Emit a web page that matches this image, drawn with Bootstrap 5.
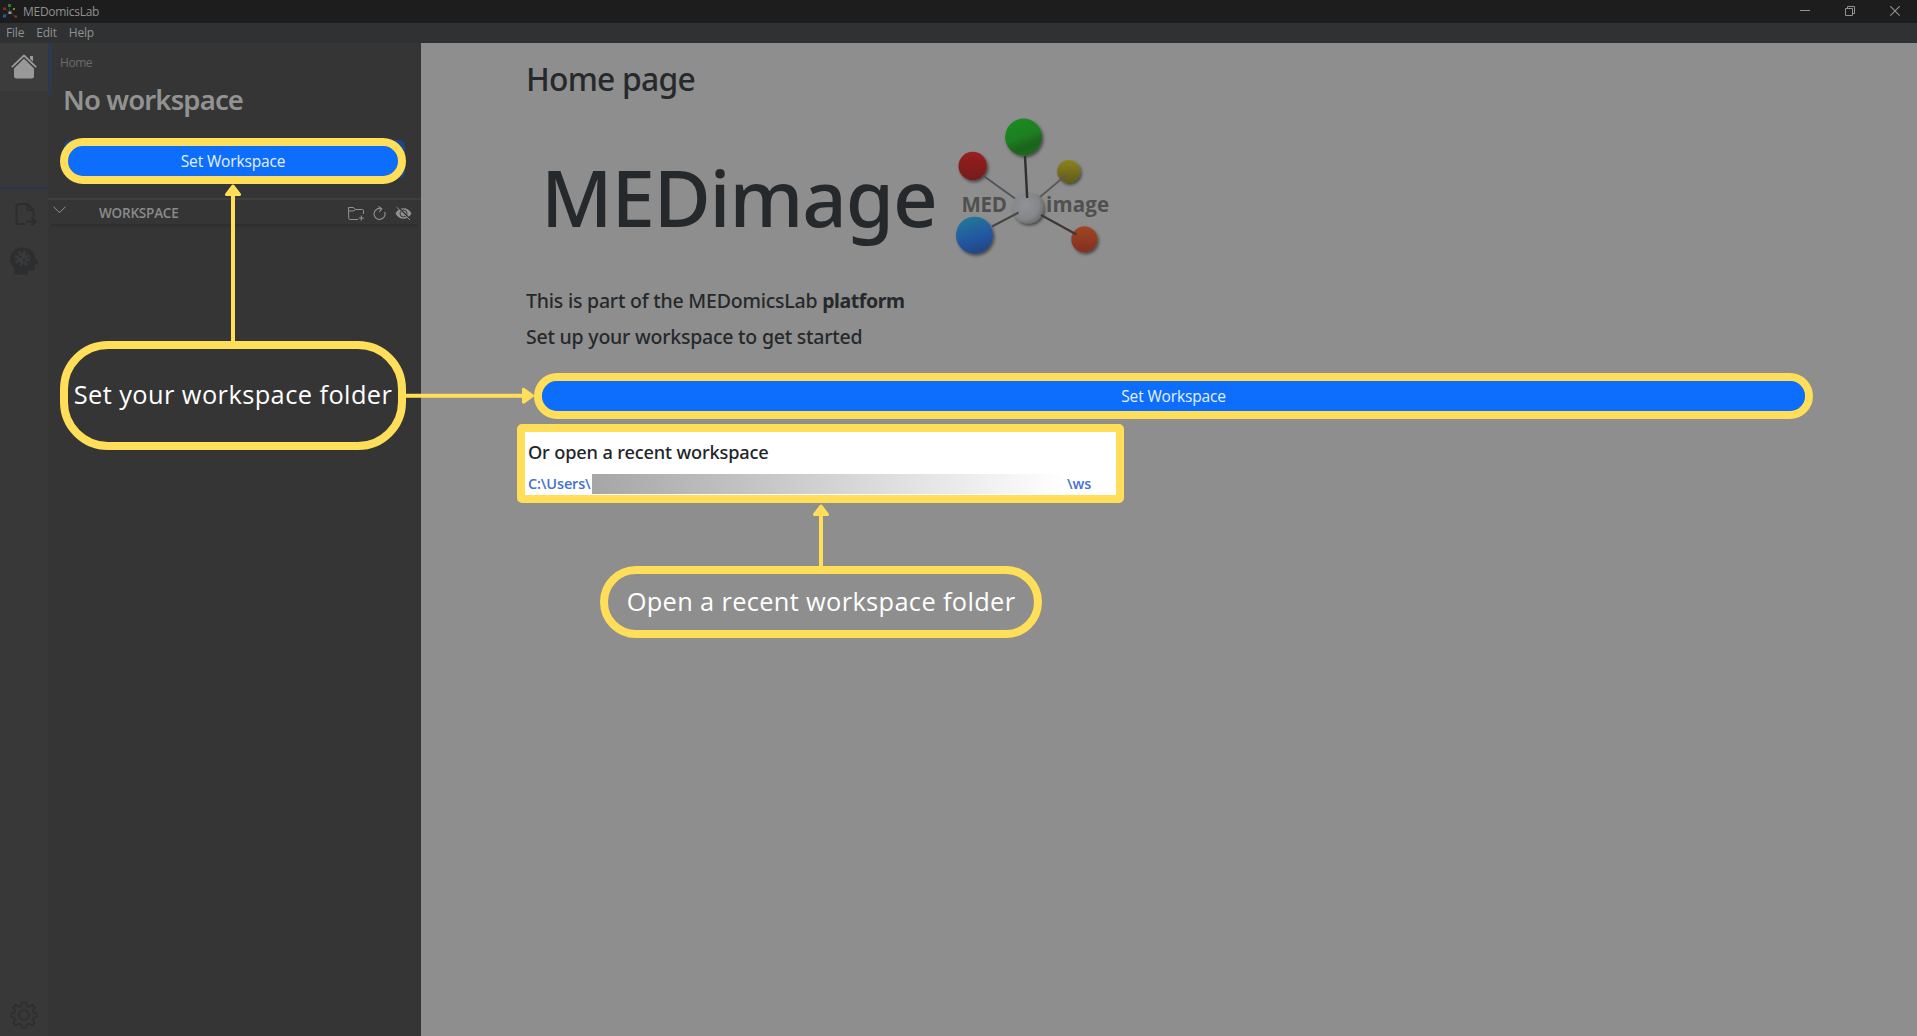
<!DOCTYPE html>
<html lang="en">
<head>
<meta charset="utf-8">
<meta name="viewport" content="width=device-width, initial-scale=1">
<title>MEDomicsLab</title>
<link href="https://cdn.jsdelivr.net/npm/bootstrap@5.3.0/dist/css/bootstrap.min.css" rel="stylesheet">
<style>
:root{--hl:#ffde59}
body{font-family:"Open Sans","Noto Sans",sans-serif;background:#8e8e8e;width:1917px;height:1036px;overflow:hidden;position:relative;color:#26292c}
svg{display:block;flex:none}
.titlebar{height:23px;background:#1d1d1d;color:#919191;font-size:12px;letter-spacing:-.28px;line-height:23px;padding-left:2px}
.titlebar .app-name{margin-left:5px}
.win-controls{gap:35px;padding-right:17px}
.menubar{height:20px;background:#2f3133;color:#919191;font-size:12px;line-height:19px;letter-spacing:-.2px;padding-left:6px;gap:12px}
.workarea{height:993px}
.rail{width:48px;background:#383838;flex:none}
.rail-home{height:48px;background:#3c3c3c}
.rail-group{height:98px;border-bottom:2px solid #26344d}
.rail-file{margin:13px 0 0 3px}
.rail-mind{margin-top:20px}
.rail-gear{margin-bottom:7px}
.rail-strip{position:absolute;left:48px;top:43px;width:4px;height:52px;background:#2c394e}
.sidebar{width:373px;background:#353535;flex:none}
.crumb{font-size:12px;letter-spacing:-.45px;color:#6b6b6b;line-height:16px;margin:12px 0 0 12px}
.ws-title{font-family:"Noto Sans","Open Sans",sans-serif;font-size:27.5px;font-weight:600;letter-spacing:-.88px;line-height:34px;color:#929292;margin:12px 0 0 15px}
.ws-btn-wrap{margin:23px 16px 0 16px;background:#1d4686;border-radius:6px;height:38px}
.btn-ws{background:#0d6efd;color:#e8f1ff;font-size:15.5px;letter-spacing:-.15px;line-height:1;border:0;border-radius:15px;height:30px;padding:1px 0 0}
.btn-ws:hover{background:#0d6efd;color:#fff}
.ws-btn-wrap .btn-ws{margin:6px 4px 2px;width:330px}
.acc-head{margin-top:20px;height:26px;border-top:2px solid #3f3f3f;color:#8b8b8b;padding:0 9px 0 5px}
.acc-shadow{margin:0 3px;height:4px;background:linear-gradient(#2d2d2d,#353535)}
.acc-chevron{margin-top:-4px}
.acc-label{font-size:13.5px;font-weight:600;letter-spacing:-.2px;line-height:24px;margin:1px 0 0 33px}
.acc-tools{gap:9px;padding-top:2px}
.content-pane{padding:17px 0 0 105px}
.content-pane h2,.content-pane h1,.content-pane h5{font-family:"Noto Sans","Open Sans",sans-serif;font-weight:500;margin:0}
.content-pane h2{font-size:31.8px;letter-spacing:-.75px;line-height:38px}
.brand-row{height:170px;margin-top:2px}
.content-pane h1{font-size:78px;letter-spacing:-1.15px;line-height:194px;width:383px;margin-left:15px;white-space:nowrap}
.brand-row svg{margin-left:6px}
.content-pane h5{font-size:19.5px;letter-spacing:-.22px;line-height:24px}
.content-pane h5 b{font-weight:700;letter-spacing:-.4px}
.line-one{padding-top:19px}
.line-two{padding-top:12px}
.main-btn-row{margin:24px 0 0 8px;width:1279px;height:46px}
.hl-pill{border:8px solid var(--hl);border-radius:23px}
.recent-box{margin:5px 0 0 -9px;width:607px;height:79px;border:8px solid var(--hl);border-radius:5px;background:#fff;color:#212529;padding:8px 3px 0}
.content-pane .recent-box h5{font-size:18.2px;letter-spacing:-.15px}
.recent-path{height:20px;margin-top:10px;color:#4472d0;font-weight:600;font-size:14.5px;letter-spacing:-.15px;line-height:20px}
.path-start{width:63px}
.path-end{margin-left:2px}
.masked{width:473px;height:20px;margin-left:1px;background:linear-gradient(90deg,#a6a6a6,#fff)}
.callout{position:absolute;color:#fff;border:8px solid var(--hl);white-space:nowrap;display:flex;align-items:center;justify-content:center;font-size:25.4px;padding-bottom:2px}
.ring-side{position:absolute;left:60px;top:138px;width:346px;height:46px}
.callout-set{left:60px;top:341px;width:346px;height:109px;border-radius:48px;letter-spacing:.42px}
.callout-open{left:600px;top:566px;width:442px;height:72px;border-radius:36px;letter-spacing:.34px}
.arrows{position:absolute;left:0;top:0;pointer-events:none}
</style>
<script src="https://cdn.jsdelivr.net/npm/bootstrap@5.3.0/dist/js/bootstrap.bundle.min.js"></script>
</head>
<body>
<header class="titlebar d-flex align-items-center">
  <svg width="16" height="16" viewBox="0 0 16 16"><path d="M7.500 2v6M3 5l4 3M12 5L8 8M3 12l4-3M13 12L9 9" stroke="#3c3c3c" stroke-width=".8"/><g><rect x="6" y="0" width="3" height="3" fill="#178a22"/><rect x="1" y="3.500" width="3" height="2.500" fill="#9a2424"/><rect x="11" y="4" width="2" height="2" fill="#87801c"/><rect x="6.500" y="7.500" width="3" height="2.500" fill="#969696"/><rect x="1" y="10.500" width="3" height="3" fill="#1b60a8"/><rect x="12.500" y="11.500" width="2.500" height="2" fill="#9a3a20"/></g></svg>
  <span class="app-name">MEDomicsLab</span>
  <div class="win-controls d-flex align-items-center ms-auto">
    <svg width="10" height="11" viewBox="0 0 10 11"><path d="M0 4.500h10" stroke="#929292"/></svg>
    <svg width="10" height="11" viewBox="0 0 10 11" fill="none" stroke="#929292"><path d="M.5 2.500h7v7h-7zM2.500 2.500v-2h7v7h-2"/></svg>
    <svg width="10" height="11" viewBox="0 0 10 11"><path d="M.3.300l9.400 9.400M9.700.300L.3 9.700" stroke="#929292" stroke-width="1.200"/></svg>
  </div>
</header>
<nav class="menubar d-flex"><span>File</span><span>Edit</span><span>Help</span></nav>

<div class="workarea d-flex">
  <aside class="rail d-flex flex-column align-items-center">
    <div class="rail-home w-100 d-flex justify-content-center align-items-center">
      <svg width="26" height="26" viewBox="0 0 26 26"><path d="M19 2h3v6l-3-3z" fill="#999"/><path d="M3 12.500L13 3l10 9.500V22a2.500 2.500 0 0 1-2.500 2.500h-15A2.500 2.500 0 0 1 3 22z" fill="#999"/><path d="M.8 13.700L13 1.700l12.200 12" fill="none" stroke="#3c3c3c" stroke-width="4"/><path d="M.8 13.200L13 1.500l12.200 11.700" fill="none" stroke="#999" stroke-width="1.800" stroke-linejoin="round"/></svg>
    </div>
    <div class="rail-group w-100"></div>
    <svg class="rail-file" width="22" height="25" viewBox="0 0 22 25" fill="none" stroke="#2c2d2e" stroke-width="2"><path d="M10 22H4a2.500 2.500 0 0 1-2.500-2.500v-15A2.500 2.500 0 0 1 4 2h8.500l6 6v6.500M12.500 2v6h6M11 19.500h9M16.500 15.500l4 4-4 4"/></svg>
    <svg class="rail-mind" width="28" height="28" viewBox="0 0 28 28"><path d="M4 27.500v-7C1.500 18.500 0 16 0 12.500 0 5.500 5.500.5 13 .5c7 0 11.500 4 12 9.500l3 5.500c.3.700-.2 1.300-1 1.300h-2v4c0 2-1 3-3 3h-4v3.700z" fill="#2c2e30"/><circle cx="12.500" cy="11.500" r="5" fill="#3a3a3a"/><circle cx="12.500" cy="11.500" r="6.200" fill="none" stroke="#3a3a3a" stroke-width="3" stroke-dasharray="2.600 2.270"/><circle cx="10.500" cy="9.800" r="1.300" fill="#2c2e30"/><circle cx="14" cy="13" r="1.300" fill="#2c2e30"/></svg>
    <svg class="rail-gear mt-auto" width="28" height="28" viewBox="0 0 28 28" fill="none" stroke="#2e2e2e" stroke-width="1.600"><circle cx="14" cy="14" r="4.800"/><path stroke-linejoin="round" d="M12 1.500h4l.8 3.300 2.200.9 3-1.800 2.600 2.600-1.800 3 .9 2.200 3.300.8v3.400l-3.300.8-.9 2.200 1.800 3-2.600 2.600-3-1.800-2.200.9-.8 3.300h-4l-.8-3.300-2.200-.9-3 1.800-2.600-2.600 1.800-3-.9-2.200-3.300-.8v-3.400l3.300-.8.9-2.200-1.800-3 2.600-2.600 3 1.800 2.200-.9z"/></svg>
  </aside>

  <section class="sidebar">
    <div class="crumb">Home</div>
    <h3 class="ws-title">No workspace</h3>
    <div class="ws-btn-wrap d-flex"><button class="btn btn-ws">Set Workspace</button></div>
    <div class="acc-head d-flex align-items-center">
      <svg class="acc-chevron" width="13" height="8" viewBox="0 0 13 8" fill="none" stroke="#929292"><path d="M.5.700l6 6 6-6"/></svg>
      <span class="acc-label">WORKSPACE</span>
      <div class="acc-tools ms-auto d-flex align-items-center">
        <svg width="16" height="15" viewBox="0 0 16 15" fill="none" stroke="#929292"><path d="M10 13.500H2a1.500 1.500 0 0 1-1.300-1.300L.5 1.500h5L7 3.500h7.500a1 1 0 0 1 1 1V8M.6 5h5.200L7 3.700M13.300 9.500v5.200M10.700 12.100h5.200"/></svg>
        <svg width="13" height="15" viewBox="0 0 13 15" fill="none" stroke="#929292" stroke-width="1.100"><path d="M8.500 2.800A5.500 5.500 0 1 0 11.700 6M5.500.400l3.300 2.400-2.500 3"/></svg>
        <svg width="17" height="15" viewBox="0 0 17 15"><path d="M.5 7.500C4 .5 13 .5 16.500 7.500 13 14.500 4 14.500.5 7.500z" fill="#929292"/><circle cx="8.500" cy="7.500" r="3.500" fill="none" stroke="#353535"/><path d="M2.500.700l13 13" stroke="#353535" stroke-width="2"/><path d="M1.500 1l13.500 13" stroke="#929292"/></svg>
      </div>
    </div>
    <div class="acc-shadow"></div>
  </section>

  <main class="content-pane flex-grow-1">
    <h2>Home page</h2>
    <div class="brand-row d-flex align-items-start">
      <h1>MEDimage</h1>
      <svg width="200" height="170" viewBox="0 0 200 170">
        <defs>
          <linearGradient id="gG" x1="0.100" y1="0" x2=".5" y2="1"><stop offset="0" stop-color="#1f8d22"/><stop offset=".55" stop-color="#1f7f20"/><stop offset=".8" stop-color="#1e641e"/><stop offset="1" stop-color="#1f681f"/></linearGradient>
          <linearGradient id="gR" x1="0" y1="0" x2="0" y2="1"><stop offset="0" stop-color="#9a2020"/><stop offset="1" stop-color="#741c1c"/></linearGradient>
          <linearGradient id="gY" x1="0" y1="0" x2="0" y2="1"><stop offset="0" stop-color="#8b8320"/><stop offset="1" stop-color="#615b18"/></linearGradient>
          <linearGradient id="gB" x1=".3" y1="0" x2=".6" y2="1"><stop offset="0" stop-color="#20789a"/><stop offset=".6" stop-color="#2057a0"/><stop offset="1" stop-color="#204582"/></linearGradient>
          <linearGradient id="gO" x1="0" y1="0" x2="0" y2="1"><stop offset="0" stop-color="#9f4620"/><stop offset="1" stop-color="#822f22"/></linearGradient>
          <radialGradient id="gW" cx=".4" cy=".4" r=".6"><stop offset="0" stop-color="#8f9298"/><stop offset=".75" stop-color="#85878a"/><stop offset="1" stop-color="#727272"/></radialGradient>
          <filter id="sh" x="-30%" y="-30%" width="170%" height="170%"><feDropShadow dx="1.500" dy="2" stdDeviation="1.500" flood-color="#000" flood-opacity=".5"/></filter>
        </defs>
        <g filter="url(#sh)">
          <circle cx="98" cy="108" r="15.500" fill="url(#gW)"/>
          <circle cx="93.500" cy="37" r="18.400" fill="url(#gG)"/><circle cx="42.700" cy="66" r="14.200" fill="url(#gR)"/>
          <circle cx="138.700" cy="71.400" r="11.500" fill="url(#gY)"/><circle cx="44.500" cy="135.200" r="18.500" fill="url(#gB)"/>
          <circle cx="154.300" cy="139.300" r="13" fill="url(#gO)"/>
        </g>
        <g stroke-width="2" fill="none"><path d="M95 56l2.200 42" stroke="#2f2f2f" stroke-width="2.400"/><path d="M53 75.500l32 23" stroke="#51545a"/><path d="M135.500 75.500L110 97" stroke="#5b5a57"/><path d="M88.500 112.500L62 126.500" stroke="#444"/><path d="M111 115l35.500 19.500" stroke="#3a3836"/></g>
        <g font-family="'Open Sans','Noto Sans',sans-serif" font-weight="700" font-size="20.500" fill="#505050"><text x="31.500" y="111.500" textLength="45.500">MED</text><text x="116" y="111.500" textLength="63">image</text></g>
      </svg>
    </div>
    <h5 class="line-one">This is part of the MEDomicsLab <b>platform</b></h5>
    <h5 class="line-two">Set up your workspace to get started</h5>
    <div class="main-btn-row hl-pill"><button class="btn btn-ws w-100 d-block">Set Workspace</button></div>
    <div class="recent-box">
      <h5>Or open a recent workspace</h5>
      <div class="recent-path d-flex"><span class="path-start">C:\Users\</span><span class="masked"></span><span class="path-end">\ws</span></div>
    </div>
  </main>
</div>

<div class="rail-strip"></div>
<div class="ring-side hl-pill"></div>
<div class="callout callout-set">Set your workspace folder</div>
<div class="callout callout-open">Open a recent workspace folder</div>
<svg class="arrows" width="1100" height="620" viewBox="0 0 1100 620" stroke="#ffde59" fill="#ffde59" stroke-linejoin="round">
  <g stroke-width="4"><path d="M233 190v152M406 395.700h120M821 510v57"/></g>
  <g stroke-width="3"><path d="M233 186l6.500 8.500h-13zM532.500 395.700l-9 6.500v-13zM821 506l6.500 8.500h-13z"/></g>
</svg>
</body>
</html>
